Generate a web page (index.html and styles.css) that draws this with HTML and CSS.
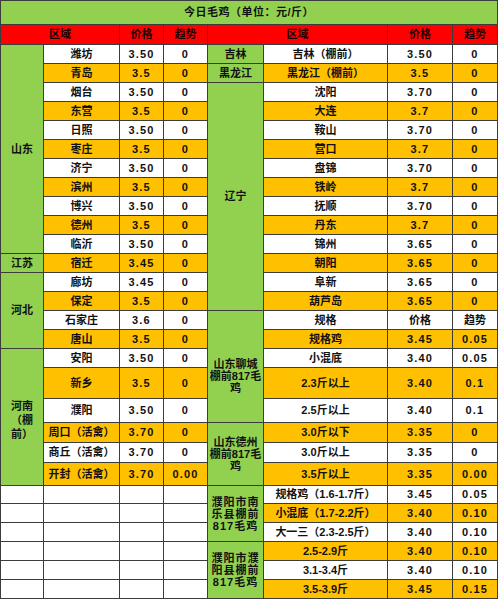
FILE: index.html
```html
<!DOCTYPE html>
<html lang="zh">
<head>
<meta charset="utf-8">
<title>今日毛鸡</title>
<link rel="stylesheet" href="styles.css">
</head>
<body>
<div class="sheet">
  <div class="c title s8">今日毛鸡（单位：元/斤）</div>

  <div class="c red s2">区域</div><div class="c red">价格</div><div class="c red">趋势</div>
  <div class="c red s2">区域</div><div class="c red">价格</div><div class="c red">趋势</div>

  <div class="c g r11">山东</div>
  <div class="c w">潍坊</div><div class="c w n">3.50</div><div class="c w n">0</div>
  <div class="c g">吉林</div><div class="c w">吉林（棚前）</div><div class="c w n">3.50</div><div class="c w n">0</div>

  <div class="c o">青岛</div><div class="c o n">3.5</div><div class="c o n">0</div>
  <div class="c g">黑龙江</div><div class="c o">黑龙江（棚前）</div><div class="c o n">3.5</div><div class="c o n">0</div>

  <div class="c w">烟台</div><div class="c w n">3.50</div><div class="c w n">0</div>
  <div class="c g r12">辽宁</div><div class="c w">沈阳</div><div class="c w n">3.70</div><div class="c w n">0</div>

  <div class="c o">东营</div><div class="c o n">3.5</div><div class="c o n">0</div>
  <div class="c o">大连</div><div class="c o n">3.7</div><div class="c o n">0</div>

  <div class="c w">日照</div><div class="c w n">3.50</div><div class="c w n">0</div>
  <div class="c w">鞍山</div><div class="c w n">3.70</div><div class="c w n">0</div>

  <div class="c o">枣庄</div><div class="c o n">3.5</div><div class="c o n">0</div>
  <div class="c o">营口</div><div class="c o n">3.7</div><div class="c o n">0</div>

  <div class="c w">济宁</div><div class="c w n">3.50</div><div class="c w n">0</div>
  <div class="c w">盘锦</div><div class="c w n">3.70</div><div class="c w n">0</div>

  <div class="c o">滨州</div><div class="c o n">3.5</div><div class="c o n">0</div>
  <div class="c o">铁岭</div><div class="c o n">3.7</div><div class="c o n">0</div>

  <div class="c w">博兴</div><div class="c w n">3.50</div><div class="c w n">0</div>
  <div class="c w">抚顺</div><div class="c w n">3.70</div><div class="c w n">0</div>

  <div class="c o">德州</div><div class="c o n">3.5</div><div class="c o n">0</div>
  <div class="c o">丹东</div><div class="c o n">3.7</div><div class="c o n">0</div>

  <div class="c w">临沂</div><div class="c w n">3.50</div><div class="c w n">0</div>
  <div class="c w">锦州</div><div class="c w n">3.65</div><div class="c w n">0</div>

  <div class="c g">江苏</div>
  <div class="c o">宿迁</div><div class="c o n">3.45</div><div class="c o n">0</div>
  <div class="c o">朝阳</div><div class="c o n">3.65</div><div class="c o n">0</div>

  <div class="c g r4">河北</div>
  <div class="c w">廊坊</div><div class="c w n">3.45</div><div class="c w n">0</div>
  <div class="c w">阜新</div><div class="c w n">3.65</div><div class="c w n">0</div>

  <div class="c o">保定</div><div class="c o n">3.5</div><div class="c o n">0</div>
  <div class="c o">葫芦岛</div><div class="c o n">3.65</div><div class="c o n">0</div>

  <div class="c w">石家庄</div><div class="c w n">3.6</div><div class="c w n">0</div>
  <div class="c g r5 multi low">山东聊城<br>棚前817毛<br>鸡</div>
  <div class="c w">规格</div><div class="c w">价格</div><div class="c w">趋势</div>

  <div class="c o">唐山</div><div class="c o n">3.5</div><div class="c o n">0</div>
  <div class="c o">规格鸡</div><div class="c o n">3.45</div><div class="c o n">0.05</div>

  <div class="c g r6 multi henan">河南<br>（棚<br>前）</div>
  <div class="c w">安阳</div><div class="c w n">3.50</div><div class="c w n">0</div>
  <div class="c w">小混底</div><div class="c w n">3.40</div><div class="c w n">0.05</div>

  <div class="c o">新乡</div><div class="c o n">3.5</div><div class="c o n">0</div>
  <div class="c o">2.3斤以上</div><div class="c o n">3.40</div><div class="c o n">0.1</div>

  <div class="c w">濮阳</div><div class="c w n">3.50</div><div class="c w n">0</div>
  <div class="c w">2.5斤以上</div><div class="c w n">3.40</div><div class="c w n">0.1</div>

  <div class="c o">周口（活禽）</div><div class="c o n">3.70</div><div class="c o n">0</div>
  <div class="c g r3 multi">山东德州<br>棚前817毛<br>鸡</div>
  <div class="c o">3.0斤以下</div><div class="c o n">3.35</div><div class="c o n">0</div>

  <div class="c w">商丘（活禽）</div><div class="c w n">3.70</div><div class="c w n">0</div>
  <div class="c w">3.0斤以上</div><div class="c w n">3.35</div><div class="c w n">0</div>

  <div class="c o">开封（活禽）</div><div class="c o n">3.70</div><div class="c o n">0.00</div>
  <div class="c o">3.5斤以上</div><div class="c o n">3.35</div><div class="c o n">0.00</div>

  <div class="c w"></div><div class="c w"></div><div class="c w"></div><div class="c w"></div>
  <div class="c g r3 multi wide">濮阳市南<br>乐县棚前<br>817毛鸡</div>
  <div class="c w">规格鸡（1.6-1.7斤）</div><div class="c w n">3.45</div><div class="c w n">0.05</div>

  <div class="c w"></div><div class="c w"></div><div class="c w"></div><div class="c w"></div>
  <div class="c o">小混底（1.7-2.2斤）</div><div class="c o n">3.40</div><div class="c o n">0.10</div>

  <div class="c w"></div><div class="c w"></div><div class="c w"></div><div class="c w"></div>
  <div class="c w">大一三（2.3-2.5斤）</div><div class="c w n">3.40</div><div class="c w n">0.10</div>

  <div class="c w"></div><div class="c w"></div><div class="c w"></div><div class="c w"></div>
  <div class="c g r3 multi wide">濮阳市濮<br>阳县棚前<br>817毛鸡</div>
  <div class="c o">2.5-2.9斤</div><div class="c o n">3.40</div><div class="c o n">0.10</div>

  <div class="c w"></div><div class="c w"></div><div class="c w"></div><div class="c w"></div>
  <div class="c w">3.1-3.4斤</div><div class="c w n">3.40</div><div class="c w n">0.10</div>

  <div class="c w"></div><div class="c w"></div><div class="c w"></div><div class="c w"></div>
  <div class="c o">3.5-3.9斤</div><div class="c o n">3.45</div><div class="c o n">0.15</div>
</div>
</body>
</html>
```

FILE: styles.css
```css
html, body {
  margin: 0;
  padding: 0;
  background: #ffffff;
}

.sheet {
  display: grid;
  width: 498px;
  box-sizing: border-box;
  padding: 1px;
  gap: 1px;
  background: #3c3c3c;
  grid-template-columns: 42px 75px 43px 43px 55px 123px 64px 44px;
  grid-template-rows: 23px 19px repeat(14, 18px) 18px 18px 18px 30px 23px 19px 19px 22px 17px 18px 18px 18px 18px 18px;
  font-family: "Liberation Sans", "Noto Sans CJK SC", sans-serif;
  font-weight: 700;
  font-size: 11px;
  color: #111111;
}

.c {
  display: flex;
  align-items: center;
  justify-content: center;
  text-align: center;
  white-space: nowrap;
  line-height: 1;
  overflow: hidden;
}

.title { background: #92d050; grid-column: span 8; letter-spacing: 0.5px; }
.red { background: #ff0000; color: #1a0000; }
.g { background: #92d050; }
.w { background: #ffffff; }
.o { background: #ffc000; }

.n { letter-spacing: 1.2px; }

.s2 { grid-column: span 2; }
.s8 { grid-column: span 8; }
.r3 { grid-row: span 3; }
.r4 { grid-row: span 4; }
.r5 { grid-row: span 5; }
.r6 { grid-row: span 6; }
.r11 { grid-row: span 11; }
.r12 { grid-row: span 12; }

.multi { line-height: 12px; }
.low { padding-top: 18px; }
.henan { line-height: 14px; padding-top: 6px; }
.wide { letter-spacing: 1px; }
```
